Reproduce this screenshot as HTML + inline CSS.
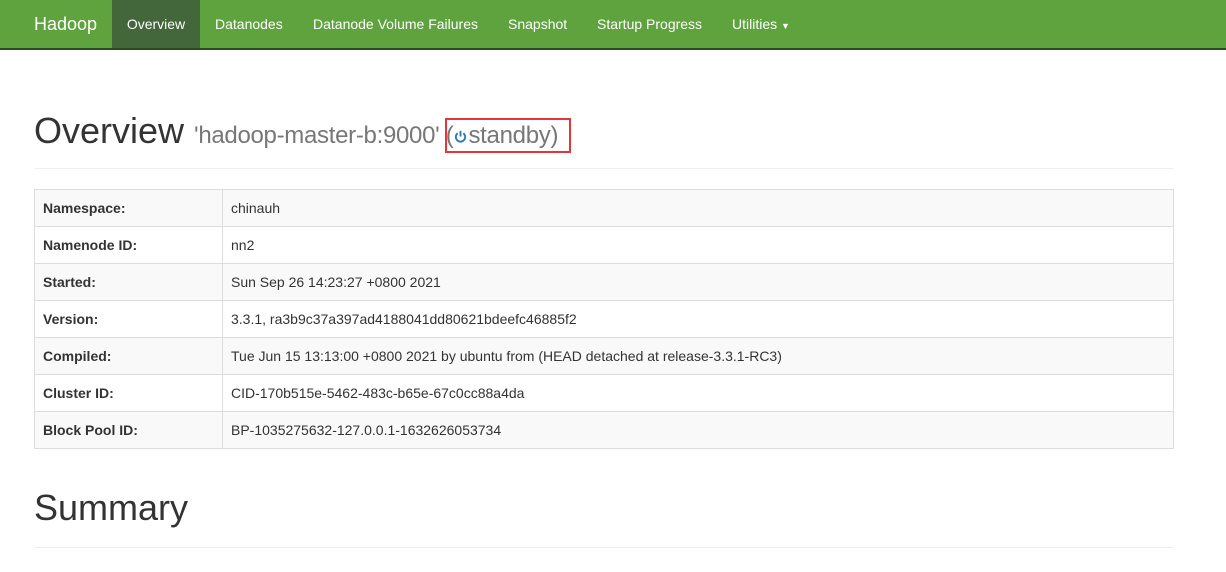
<!DOCTYPE html>
<html><head><style>
body{margin:0;font-family:"Liberation Sans",sans-serif;color:#333;background:#fff;width:1226px;height:572px;overflow:hidden;font-size:14px}
.nav{height:48px;background:#5fa33e;border-bottom:2px solid #2e4a20;position:relative}
.nav span{position:absolute;top:0;height:48px;line-height:48px;color:#fff;font-size:14px}
.brand{font-size:18px!important;left:34px}
h1{position:absolute;margin:0;font-weight:500;font-size:36px;left:34px;top:110px}
h1 small{font-size:24px;color:#777;font-weight:400;letter-spacing:-0.3px}
.box{position:absolute;left:445px;top:118px;width:122px;height:31px;border:2px solid #e3373c}
hr{position:absolute;left:34px;width:1139px;border:0;border-top:1px solid #eee;margin:0}
table{position:absolute;left:34px;top:189px;width:1140px;border-collapse:collapse}
td{border:1px solid #ddd;height:36px;padding:0 8px;font-size:14px}
tr:nth-child(odd) td{background:#f9f9f9}
td:first-child{width:171px;font-weight:bold}
h2{position:absolute;margin:0;font-weight:500;font-size:36px;left:34px;top:487px}
</style></head><body>
<div class="nav">
<span class="brand">Hadoop</span>
<span style="left:112px;width:88px;background:#43663a;text-align:center">Overview</span>
<span style="left:215px">Datanodes</span>
<span style="left:313px">Datanode Volume Failures</span>
<span style="left:508px">Snapshot</span>
<span style="left:597px">Startup Progress</span>
<span style="left:732px">Utilities <span style="position:static;font-size:9px">▼</span></span>
</div>
<h1>Overview <small>'hadoop-master-b:9000' (<svg width="15" height="15" viewBox="0 0 16 16" style="vertical-align:-1px"><path d="M5 4.5A5 5 0 1 0 11 4.5" fill="none" stroke="#2a7ab8" stroke-width="2"/><path d="M8 2v6" stroke="#2a7ab8" stroke-width="2"/></svg>standby)</small></h1>
<div class="box"></div>
<hr style="top:168px">
<table>
<tr><td>Namespace:</td><td>chinauh</td></tr>
<tr><td>Namenode ID:</td><td>nn2</td></tr>
<tr><td>Started:</td><td>Sun Sep 26 14:23:27 +0800 2021</td></tr>
<tr><td>Version:</td><td>3.3.1, ra3b9c37a397ad4188041dd80621bdeefc46885f2</td></tr>
<tr><td>Compiled:</td><td>Tue Jun 15 13:13:00 +0800 2021 by ubuntu from (HEAD detached at release-3.3.1-RC3)</td></tr>
<tr><td>Cluster ID:</td><td>CID-170b515e-5462-483c-b65e-67c0cc88a4da</td></tr>
<tr><td>Block Pool ID:</td><td>BP-1035275632-127.0.0.1-1632626053734</td></tr>
</table>
<h2>Summary</h2>
<hr style="top:547px">
</body></html>
